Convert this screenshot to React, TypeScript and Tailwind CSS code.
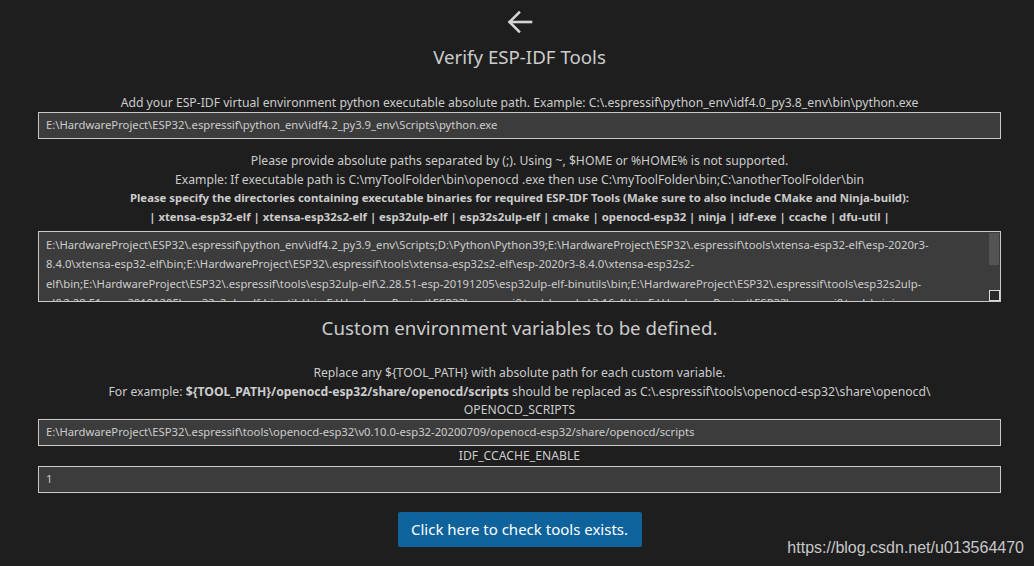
import React from 'react';

const font = { fontFamily: '"Noto Sans", "Open Sans", sans-serif' };

const pathLines = [
    'E:\\HardwareProject\\ESP32\\.espressif\\python_env\\idf4.2_py3.9_env\\Scripts;D:\\Python\\Python39;E:\\HardwareProject\\ESP32\\.espressif\\tools\\xtensa-esp32-elf\\esp-2020r3-',
    '8.4.0\\xtensa-esp32-elf\\bin;E:\\HardwareProject\\ESP32\\.espressif\\tools\\xtensa-esp32s2-elf\\esp-2020r3-8.4.0\\xtensa-esp32s2-',
    'elf\\bin;E:\\HardwareProject\\ESP32\\.espressif\\tools\\esp32ulp-elf\\2.28.51-esp-20191205\\esp32ulp-elf-binutils\\bin;E:\\HardwareProject\\ESP32\\.espressif\\tools\\esp32s2ulp-',
    'elf\\2.28.51-esp-20191205\\esp32s2ulp-elf-binutils\\bin;E:\\HardwareProject\\ESP32\\.espressif\\tools\\cmake\\3.16.4\\bin;E:\\HardwareProject\\ESP32\\.espressif\\tools\\ninja',
];

const Field = ({ value }: { value: string }) => (
    <div className="h-[27px] bg-[#3c3c3c] border border-[#c8c8c8] px-[7px] flex items-center text-[11.25px] text-[#cccccc] whitespace-nowrap overflow-hidden">
        {value}
    </div>
);

export default function App() {
    return (
        <div className="w-[1034px] h-[566px] bg-[#1e1e1e] text-[#cccccc] overflow-hidden relative" style={font}>
            <div className="pl-[38px] pr-[33px]">
                <div className="flex flex-col items-center pt-[8px]">
                    <svg width="30" height="28" viewBox="0 0 30 28" fill="none" stroke="#d4d4d4" strokeWidth="2.6" strokeLinecap="square">
                        <path d="M26 14 H5" />
                        <path d="M14 4.5 L4.5 14 L14 23.5" />
                    </svg>
                    <h1 className="text-[18.7px] mt-[7px] leading-[28px]">Verify ESP-IDF Tools</h1>
                </div>

                <p className="text-center text-[12.2px] leading-[18px] mt-[23px]">
                    Add your ESP-IDF virtual environment python executable absolute path. Example: C:\.espressif\python_env\idf4.0_py3.8_env\bin\python.exe
                </p>
                <Field value="E:\HardwareProject\ESP32\.espressif\python_env\idf4.2_py3.9_env\Scripts\python.exe" />

                <div className="text-center text-[12.2px] leading-[18.5px] mt-[13px]">
                    <p>Please provide absolute paths separated by (;). Using ~, $HOME or %HOME% is not supported.</p>
                    <p>Example: If executable path is C:\myToolFolder\bin\openocd .exe then use C:\myToolFolder\bin;C:\anotherToolFolder\bin</p>
                    <p className="font-bold text-[11.35px]">Please specify the directories containing executable binaries for required ESP-IDF Tools (Make sure to also include CMake and Ninja-build):</p>
                    <p className="font-bold text-[11.3px]">| xtensa-esp32-elf | xtensa-esp32s2-elf | esp32ulp-elf | esp32s2ulp-elf | cmake | openocd-esp32 | ninja | idf-exe | ccache | dfu-util |</p>
                </div>

                <div className="mt-[5px] h-[71px] bg-[#3c3c3c] border border-[#c8c8c8] relative overflow-hidden">
                    <div className="pl-[7px] pt-[3px] pr-[14px] text-[11.25px] leading-[19.3px] text-[#cccccc]">
                        {pathLines.map((l) => (
                            <div key={l} className="whitespace-nowrap">{l}</div>
                        ))}
                    </div>
                    <div className="absolute right-0 top-0 w-[12px] h-full bg-[#3c3c3c]">
                        <div className="w-[10px] h-[32px] ml-[1px] mt-[1px] bg-[#545454]" />
                    </div>
                    <div className="absolute right-0 bottom-0 w-[11px] h-[11px] border border-[#d8d8d8] bg-[#2a2a2a]" />
                </div>

                <h2 className="text-center text-[18.7px] leading-[28px] mt-[12px]">Custom environment variables to be defined.</h2>

                <div className="text-center text-[12.2px] leading-[19px] mt-[21px]">
                    <p>Replace any ${'{'}TOOL_PATH{'}'} with absolute path for each custom variable.</p>
                    <p>
                        For example: <span className="font-bold">${'{'}TOOL_PATH{'}'}/openocd-esp32/share/openocd/scripts</span> should be replaced as C:\.espressif\tools\openocd-esp32\share\openocd\
                    </p>
                    <p className="leading-[18px]">OPENOCD_SCRIPTS</p>
                </div>
                <Field value="E:\HardwareProject\ESP32\.espressif\tools\openocd-esp32\v0.10.0-esp32-20200709/openocd-esp32/share/openocd/scripts" />
                <p className="text-center text-[12.2px] leading-[20px]">IDF_CCACHE_ENABLE</p>
                <Field value="1" />

                <div className="flex justify-center mt-[19px]">
                    <button className="bg-[#0e639c] text-white text-[15px] h-[35px] w-[244px] rounded-[2px]">
                        Click here to check tools exists.
                    </button>
                </div>
            </div>

            <div className="absolute right-[10px] bottom-[6px] text-[16px] text-[#c8c8c8]" style={{ fontFamily: '"Liberation Sans", Arial, sans-serif' }}>
                https://blog.csdn.net/u013564470
            </div>
        </div>
    );
}
